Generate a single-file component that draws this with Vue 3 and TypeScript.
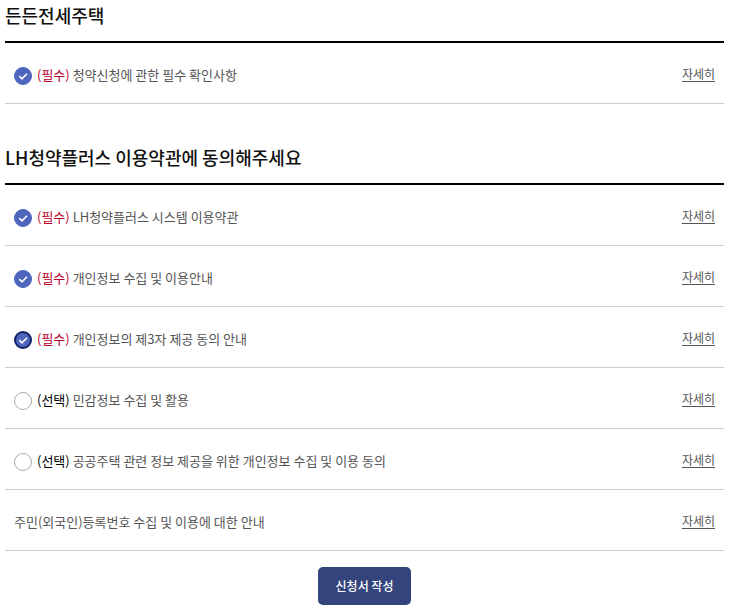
<script setup lang="ts">
import { reactive } from 'vue'

interface Term {
  id: string
  text: string
  kind?: 'required' | 'optional'
  agreed?: boolean
  active?: boolean
}

interface Section {
  title: string
  terms: Term[]
}

const sections = reactive<Section[]>([
  {
    title: '든든전세주택',
    terms: [{ id: 'notice', kind: 'required', text: '청약신청에 관한 필수 확인사항', agreed: true }],
  },
  {
    title: 'LH청약플러스 이용약관에 동의해주세요',
    terms: [
      { id: 'system', kind: 'required', text: 'LH청약플러스 시스템 이용약관', agreed: true },
      { id: 'privacy', kind: 'required', text: '개인정보 수집 및 이용안내', agreed: true },
      { id: 'third', kind: 'required', text: '개인정보의 제3자 제공 동의 안내', agreed: true, active: true },
      { id: 'sensitive', kind: 'optional', text: '민감정보 수집 및 활용', agreed: false },
      { id: 'housing', kind: 'optional', text: '공공주택 관련 정보 제공을 위한 개인정보 수집 및 이용 동의', agreed: false },
      { id: 'resident', text: '주민(외국인)등록번호 수집 및 이용에 대한 안내' },
    ],
  },
])
</script>

<template>
  <main class="page">
    <section v-for="section in sections" :key="section.title" class="section">
      <h2 class="title">{{ section.title }}</h2>
      <ul class="terms">
        <li v-for="term in section.terms" :key="term.id" class="term">
          <label v-if="term.kind" class="label" :for="term.id">
            <span class="box">
              <input :id="term.id" v-model="term.agreed" type="checkbox" class="check" :class="{ active: term.active }" />
              <svg v-if="term.agreed" class="mark" viewBox="0 0 18 18" aria-hidden="true">
                <path d="M5.3 9.2 8 11.8 13 6.7" />
              </svg>
            </span>
            <span>
              <span :class="term.kind">{{ term.kind === 'required' ? '(필수)' : '(선택)' }}</span>
              {{ term.text }}
            </span>
          </label>
          <p v-else class="label">{{ term.text }}</p>
          <a class="more" href="#">자세히</a>
        </li>
      </ul>
    </section>
    <div class="actions">
      <button type="button" class="submit">신청서 작성</button>
    </div>
  </main>
</template>

<style>
body {
  background: #fff;
}
</style>

<style scoped>
.page {
  padding: 0 6px 8px 5px;
  font-family: "Noto Sans CJK KR", sans-serif;
  font-size: 13px;
  line-height: 20px;
  color: #555;
}
.section + .section {
  margin-top: 38px;
}
.title {
  margin: 0;
  padding: 2px 0 13px;
  border-bottom: 2px solid #000;
  font-size: 18px;
  font-weight: 500;
  line-height: 26px;
  color: #111;
}
.terms {
  margin: 0;
  padding: 0;
  list-style: none;
}
.term {
  display: flex;
  align-items: center;
  justify-content: space-between;
  padding: 22px 9px 18px;
  border-bottom: 1px solid #ccc;
}
.label {
  display: flex;
  align-items: center;
  gap: 5px;
  margin: 0;
}
.box {
  display: grid;
  width: 18px;
  height: 18px;
  margin-top: 2px;
}
.check,
.mark {
  grid-area: 1 / 1;
  width: 18px;
  height: 18px;
}
.check {
  appearance: none;
  box-sizing: border-box;
  margin: 0;
  border: 1px solid #aaa;
  border-radius: 50%;
  background: #fff;
}
.check:checked {
  border-color: #4d65bc;
  background: #4d65bc;
}
.check.active {
  border: 2px solid #15226a;
}
.mark {
  pointer-events: none;
  fill: none;
  stroke: #fff;
  stroke-width: 1.6;
}
.required {
  color: #b9002b;
}
.optional {
  color: #000;
}
.more {
  align-self: flex-start;
  font-size: 12px;
  line-height: 18px;
  color: #555;
  text-decoration: underline;
  text-underline-offset: 2px;
}
.actions {
  display: flex;
  justify-content: center;
  padding-top: 16px;
}
.submit {
  padding: 9px 18px;
  border: 0;
  border-radius: 5px;
  background: #33457c;
  font-family: inherit;
  font-size: 12px;
  font-weight: 500;
  line-height: 20px;
  color: #fff;
}
</style>
